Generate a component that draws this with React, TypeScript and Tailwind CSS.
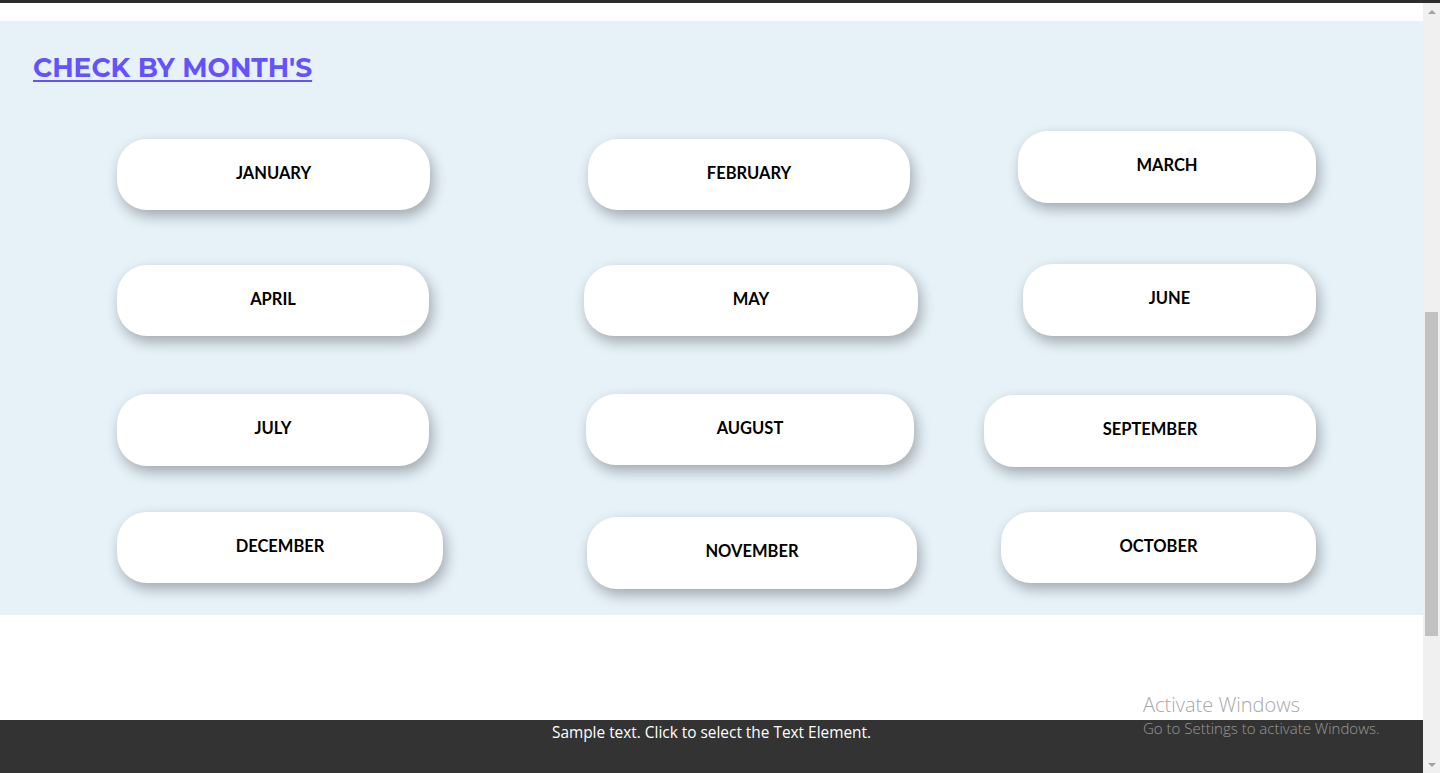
const months = [
  [
    { name: 'JANUARY', w: 'w-[313px]', ml: 'ml-0', mt: 'mt-[8px]', h: 'h-[71px]' },
    { name: 'FEBRUARY', w: 'w-[322px]', ml: 'ml-[4px]', mt: 'mt-[8px]', h: 'h-[71px]' },
    { name: 'MARCH', w: 'w-[298px]', ml: 'ml-[34px]', mt: 'mt-0', h: 'h-[72px]' },
  ],
  [
    { name: 'APRIL', w: 'w-[312px]', ml: 'ml-0', mt: 'mt-[1px]', h: 'h-[71px]' },
    { name: 'MAY', w: 'w-[334px]', ml: 'ml-0', mt: 'mt-[1px]', h: 'h-[71px]' },
    { name: 'JUNE', w: 'w-[293px]', ml: 'ml-[39px]', mt: 'mt-0', h: 'h-[72px]' },
  ],
  [
    { name: 'JULY', w: 'w-[312px]', ml: 'ml-0', mt: 'mt-0', h: 'h-[72px]' },
    { name: 'AUGUST', w: 'w-[328px]', ml: 'ml-[2px]', mt: 'mt-0', h: 'h-[71px]' },
    { name: 'SEPTEMBER', w: 'w-[332px]', ml: 'ml-0', mt: 'mt-[1px]', h: 'h-[72px]' },
  ],
  [
    { name: 'DECEMBER', w: 'w-[326px]', ml: 'ml-0', mt: 'mt-0', h: 'h-[71px]' },
    { name: 'NOVEMBER', w: 'w-[330px]', ml: 'ml-[3px]', mt: 'mt-[5px]', h: 'h-[72px]' },
    { name: 'OCTOBER', w: 'w-[315px]', ml: 'ml-[17px]', mt: 'mt-0', h: 'h-[71px]' },
  ],
];

const rowGaps = ['mt-0', 'mt-[54px]', 'mt-[58px]', 'mt-[45px]'];

function MonthButton({ m }: { m: (typeof months)[number][number] }) {
  return (
    <a
      href="#"
      className={`${m.w} ${m.h} ${m.ml} ${m.mt} flex items-center justify-center pb-[3px] rounded-[30px] bg-white text-black text-[16.5px] font-bold shadow-[3px_6px_14px_rgba(0,0,0,0.3)]`}
      style={{ fontFamily: 'Lato, "Open Sans", sans-serif' }}
    >
      {m.name}
    </a>
  );
}

function Scrollbar() {
  return (
    <div className="w-[17px] bg-[#f0f0f0] flex flex-col items-center">
      <div className="h-[17px] flex items-center justify-center">
        <div className="w-0 h-0 border-l-[4px] border-r-[4px] border-b-[4px] border-l-transparent border-r-transparent border-b-[#a3a3a3]" />
      </div>
      <div className="flex-1 w-full px-[2px]">
        <div className="mt-[292px] h-[324px] bg-[#c1c1c1]" />
      </div>
      <div className="h-[17px] flex items-center justify-center">
        <div className="w-0 h-0 border-l-[4px] border-r-[4px] border-t-[4px] border-l-transparent border-r-transparent border-t-[#a3a3a3]" />
      </div>
    </div>
  );
}

export default function App() {
  return (
    <div className="relative w-[1440px] h-[773px] overflow-hidden bg-white">
      <div className="h-[3px] bg-[#2d2d2d]" />
      <div className="flex h-[770px]">
        <div className="flex-1 flex flex-col">
          <div className="h-[18px] bg-white" />

          {/* Months section */}
          <section className="bg-[#e6f1f8] pt-[31px] pb-[26px]">
            <h2
              className="ml-[33px] text-[26.5px] leading-[32px] font-bold text-[#6552ff] underline decoration-[2px] underline-offset-[3px]"
              style={{ fontFamily: 'Montserrat, Inter, "Noto Sans", sans-serif' }}
            >
              CHECK BY MONTH&apos;S
            </h2>
            <div className="mt-[47px] flex flex-col">
              {months.map((row, i) => (
                <div key={i} className={`${rowGaps[i]} pl-[117px] grid grid-cols-[467px_400px_1fr] items-start`}>
                  {row.map((m) => (
                    <MonthButton key={m.name} m={m} />
                  ))}
                </div>
              ))}
            </div>
          </section>

          <div className="h-[105px] bg-white" />

          <footer
            className="flex-1 bg-[#333333] text-white text-[15.4px] text-center pt-[1px]"
            style={{ fontFamily: '"Open Sans", sans-serif' }}
          >
            Sample text. Click to select the Text Element.
          </footer>
        </div>
        <Scrollbar />
      </div>

      {/* Windows activation watermark */}
      <div
        className="absolute left-[1143px] top-[693px] text-[#a8a8a8] pointer-events-none"
        style={{ fontFamily: '"Open Sans", "Noto Sans", sans-serif' }}
      >
        <div className="text-[20px] leading-[24px] font-light">Activate Windows</div>
        <div className="mt-[1px] text-[15px] leading-[20px] font-light text-[#9a9a9a]">Go to Settings to activate Windows.</div>
      </div>
    </div>
  );
}
